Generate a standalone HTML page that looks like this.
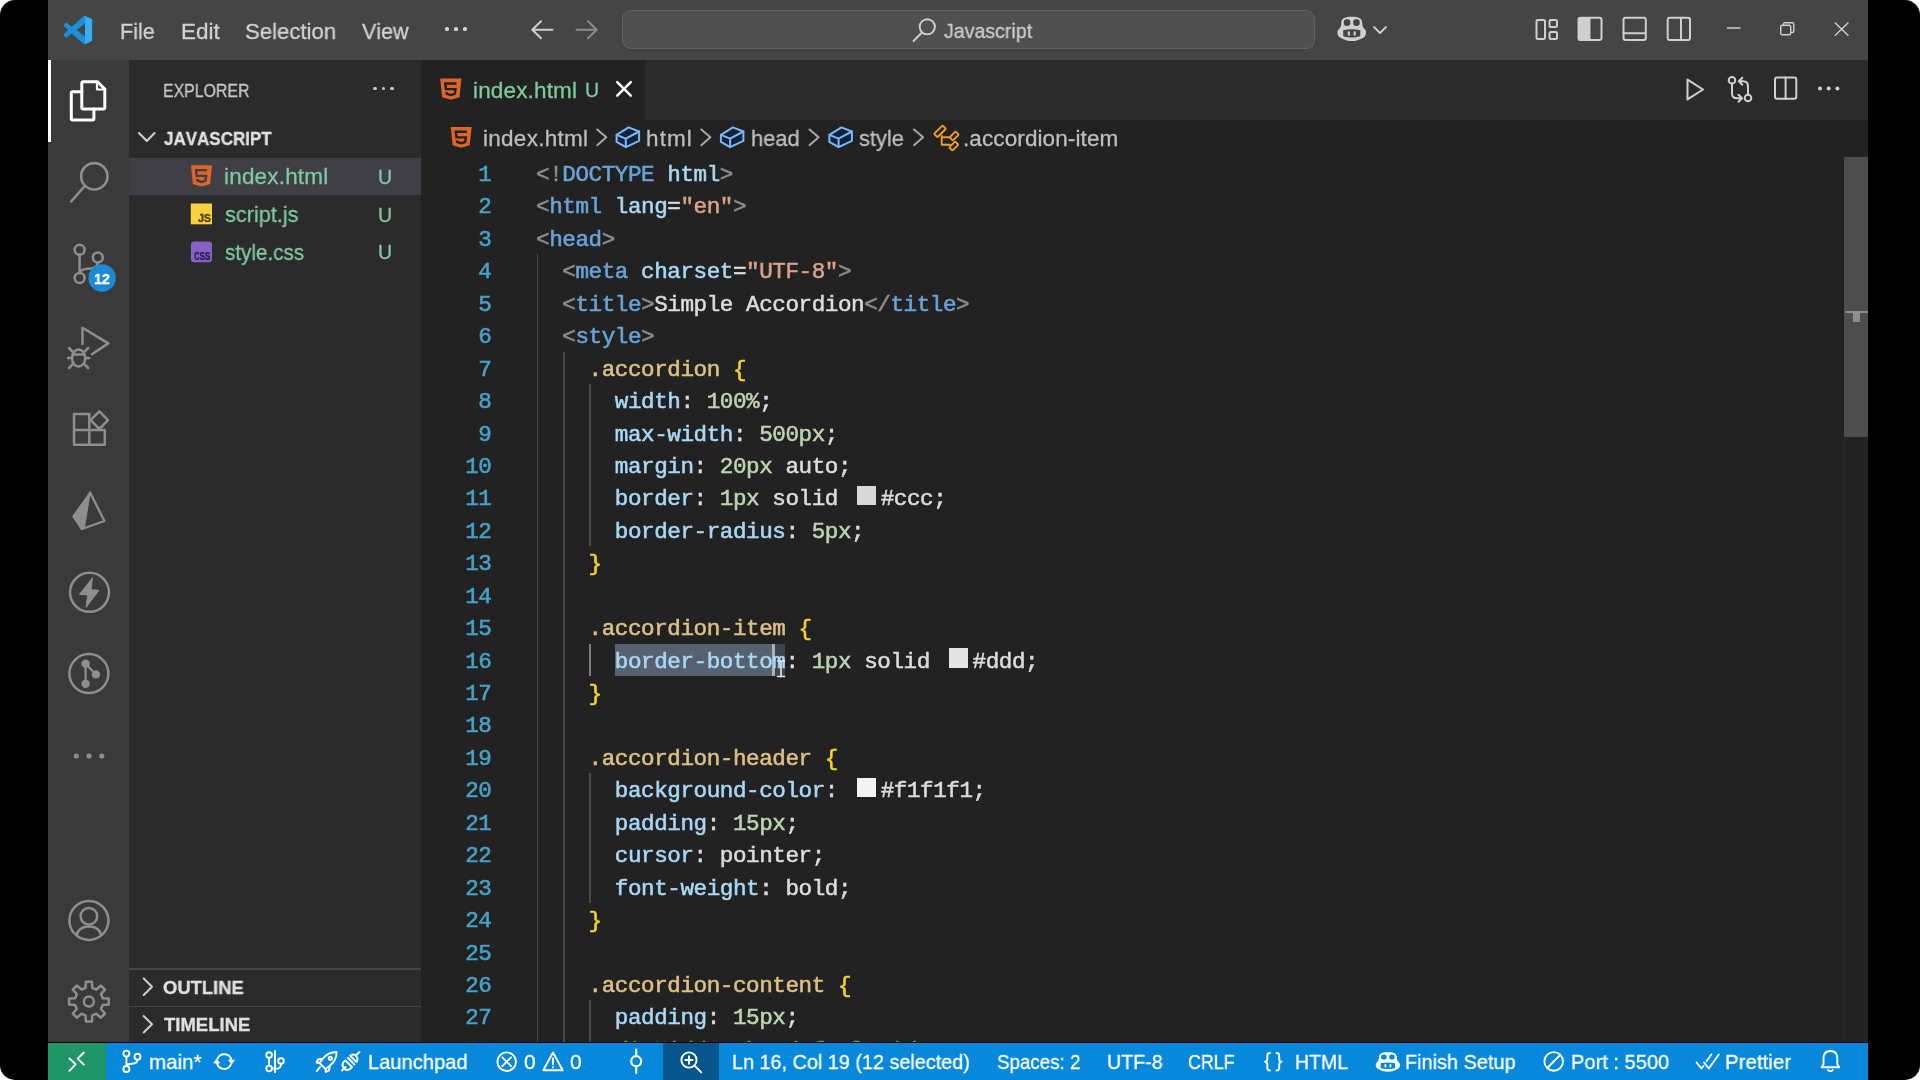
<!DOCTYPE html>
<html><head><meta charset="utf-8"><title>VS Code</title><style>
html,body{margin:0;padding:0;background:#000;font-family:"Liberation Sans",sans-serif;}
head,title,style,meta{font-family:"Liberation Sans",sans-serif;}
body{width:1920px;height:1080px;position:relative;overflow:hidden;font-family:"Liberation Sans",sans-serif;font-kerning:none;}
.r{position:absolute;}
.t{position:absolute;white-space:pre;line-height:1;font-kerning:none;transform-origin:0 0;}
.t,.code{will-change:transform}
.code{-webkit-text-stroke:0.55px}
.t{-webkit-text-stroke:0.3px}
.b{font-weight:bold}
.m{font-family:"Liberation Mono",monospace}
.code{position:absolute;overflow:hidden;font-family:"Liberation Mono",monospace;white-space:pre;font-kerning:none;width:1300px}
.ln{position:absolute;height:32.44px;line-height:32.44px;}
.sw{display:inline-block;width:19.3px;height:19.3px;margin:0 4.7px 0 5.6px;vertical-align:0;box-sizing:border-box;}
.corner{position:absolute;width:16px;height:16px;background:#fff;}
</style></head><body>
<div class="corner" style="left:0;top:0"></div><div class="corner" style="right:0;top:0"></div>
<div class="corner" style="left:0;bottom:0"></div><div class="corner" style="right:0;bottom:0"></div>
<div class="r" style="left:0;top:0;width:1920px;height:1080px;background:#000;border-radius:15px"></div>
<div class="r" style="left:48px;top:0px;width:1820.40px;height:59.80px;background:#454545;"></div>
<div class="r" style="left:48px;top:59.8px;width:81.40px;height:982.70px;background:#3a3a3a;"></div>
<div class="r" style="left:129.4px;top:59.8px;width:291.20px;height:982.70px;background:#2b2b2b;"></div>
<div class="r" style="left:420.6px;top:59.8px;width:1447.80px;height:982.70px;background:#222222;"></div>
<div class="r" style="left:420.6px;top:59.8px;width:1447.80px;height:59.80px;background:#2b2b2b;"></div>
<div class="r" style="left:420.6px;top:59.8px;width:224.40px;height:59.80px;background:#222222;"></div>
<div class="r" style="left:48px;top:1042.5px;width:1820.40px;height:37.50px;background:#0888da;"></div>
<div class="r" style="left:48px;top:1042.5px;width:58.00px;height:37.50px;background:#1f9568;"></div>
<div class="r" style="left:662.5px;top:1042.5px;width:56.50px;height:37.50px;background:#07558d;"></div>
<div class="r" style="left:48px;top:59.8px;width:3.00px;height:82.20px;background:#ffffff;"></div>
<span class="t" style="left:120.23px;top:20.75px;font-size:22.5px;color:#d2d2d2;letter-spacing:0.000px;transform:scaleX(0.9578);">File</span>
<span class="t" style="left:180.88px;top:20.75px;font-size:22.5px;color:#d2d2d2;letter-spacing:0.000px;transform:scaleX(0.9875);">Edit</span>
<span class="t" style="left:244.99px;top:20.75px;font-size:22.5px;color:#d2d2d2;letter-spacing:0.000px;transform:scaleX(0.9847);">Selection</span>
<span class="t" style="left:362.41px;top:20.75px;font-size:22.5px;color:#d2d2d2;letter-spacing:0.000px;transform:scaleX(0.9543);">View</span>
<div class="r" style="left:445.4px;top:27.4px;width:3.20px;height:3.20px;background:#d2d2d2;border-radius:50%"></div>
<div class="r" style="left:454.4px;top:27.4px;width:3.20px;height:3.20px;background:#d2d2d2;border-radius:50%"></div>
<div class="r" style="left:463.4px;top:27.4px;width:3.20px;height:3.20px;background:#d2d2d2;border-radius:50%"></div>
<div class="r" style="left:622px;top:10px;width:693px;height:39px;box-sizing:border-box;background:#505050;border:1.5px solid #626262;border-radius:9px"></div>
<span class="t" style="left:943.69px;top:19.90px;font-size:21px;color:#cccccc;letter-spacing:0.000px;transform:scaleX(0.9325);">Javascript</span>
<span class="t" style="left:163.40px;top:81.40px;font-size:19px;color:#c8c8c8;letter-spacing:0.000px;transform:scaleX(0.8363);">EXPLORER</span>
<div class="r" style="left:373.4px;top:87px;width:3.20px;height:3.20px;background:#c8c8c8;border-radius:50%"></div>
<div class="r" style="left:381.9px;top:87px;width:3.20px;height:3.20px;background:#c8c8c8;border-radius:50%"></div>
<div class="r" style="left:390.4px;top:87px;width:3.20px;height:3.20px;background:#c8c8c8;border-radius:50%"></div>
<span class="t b" style="left:164.04px;top:129.70px;font-size:18.8px;color:#e0e0e0;letter-spacing:0.000px;transform:scaleX(0.9047);">JAVASCRIPT</span>
<div class="r" style="left:129.4px;top:157.8px;width:291.20px;height:37.20px;background:#3f3f45;"></div>
<span class="t" style="left:223.89px;top:166.35px;font-size:22.5px;color:#7fca9f;letter-spacing:0.185px;">index.html</span>
<span class="t" style="left:378.10px;top:167.85px;font-size:19.5px;color:#7fca9f;letter-spacing:0.000px;">U</span>
<span class="t" style="left:224.80px;top:204.35px;font-size:22.5px;color:#7fca9f;letter-spacing:0.000px;transform:scaleX(0.9637);">script.js</span>
<span class="t" style="left:378.10px;top:205.85px;font-size:19.5px;color:#7fca9f;letter-spacing:0.000px;">U</span>
<span class="t" style="left:224.83px;top:241.65px;font-size:22.5px;color:#7fca9f;letter-spacing:0.000px;transform:scaleX(0.9172);">style.css</span>
<span class="t" style="left:378.10px;top:243.15px;font-size:19.5px;color:#7fca9f;letter-spacing:0.000px;">U</span>
<div class="r" style="left:129.4px;top:968px;width:291.20px;height:1.50px;background:#454545;"></div>
<div class="r" style="left:129.4px;top:1005.5px;width:291.20px;height:1.50px;background:#454545;"></div>
<span class="t b" style="left:163.25px;top:978.75px;font-size:18.5px;color:#e0e0e0;letter-spacing:0.000px;transform:scaleX(0.9949);">OUTLINE</span>
<span class="t b" style="left:163.79px;top:1016.45px;font-size:18.5px;color:#e0e0e0;letter-spacing:0.000px;transform:scaleX(0.9988);">TIMELINE</span>
<span class="t" style="left:473.49px;top:79.75px;font-size:22.5px;color:#7fca9f;letter-spacing:0.163px;">index.html</span>
<span class="t" style="left:584.50px;top:81.25px;font-size:19.5px;color:#7fca9f;letter-spacing:0.000px;">U</span>
<span class="t" style="left:483.49px;top:128.05px;font-size:22.5px;color:#bebebe;letter-spacing:0.274px;">index.html</span>
<span class="t" style="left:645.94px;top:128.05px;font-size:22.5px;color:#bebebe;letter-spacing:1.120px;">html</span>
<span class="t" style="left:750.98px;top:128.05px;font-size:22.5px;color:#bebebe;letter-spacing:0.000px;transform:scaleX(0.9736);">head</span>
<span class="t" style="left:859.39px;top:128.05px;font-size:22.5px;color:#bebebe;letter-spacing:0.000px;transform:scaleX(0.9700);">style</span>
<span class="t" style="left:962.95px;top:128.05px;font-size:22.5px;color:#bebebe;letter-spacing:0.102px;">.accordion-item</span>
<span class="t" style="left:149.43px;top:1051.10px;font-size:21px;color:#ffffff;letter-spacing:0.000px;transform:scaleX(0.9795);">main*</span>
<span class="t" style="left:368.35px;top:1051.10px;font-size:21px;color:#ffffff;letter-spacing:0.000px;transform:scaleX(0.9588);">Launchpad</span>
<span class="t" style="left:524.18px;top:1051.10px;font-size:21px;color:#ffffff;letter-spacing:0.000px;">0</span>
<span class="t" style="left:569.98px;top:1051.10px;font-size:21px;color:#ffffff;letter-spacing:0.000px;">0</span>
<span class="t" style="left:732.38px;top:1051.10px;font-size:21px;color:#ffffff;letter-spacing:0.000px;transform:scaleX(0.9433);">Ln 16, Col 19 (12 selected)</span>
<span class="t" style="left:997.45px;top:1051.10px;font-size:21px;color:#ffffff;letter-spacing:0.000px;transform:scaleX(0.8940);">Spaces: 2</span>
<span class="t" style="left:1106.78px;top:1051.10px;font-size:21px;color:#ffffff;letter-spacing:0.000px;transform:scaleX(0.9375);">UTF-8</span>
<span class="t" style="left:1188.09px;top:1051.10px;font-size:21px;color:#ffffff;letter-spacing:0.000px;transform:scaleX(0.8502);">CRLF</span>
<span class="t" style="left:1295.10px;top:1051.10px;font-size:21px;color:#ffffff;letter-spacing:0.000px;transform:scaleX(0.9279);">HTML</span>
<span class="t" style="left:1405.07px;top:1051.10px;font-size:21px;color:#ffffff;letter-spacing:0.000px;transform:scaleX(0.9490);">Finish Setup</span>
<span class="t" style="left:1570.85px;top:1051.10px;font-size:21px;color:#ffffff;letter-spacing:0.000px;transform:scaleX(0.9562);">Port : 5500</span>
<span class="t" style="left:1725.02px;top:1051.10px;font-size:21px;color:#ffffff;letter-spacing:0.000px;transform:scaleX(0.9769);">Prettier</span>
<div class="r" style="left:1844px;top:156.9px;width:1.30px;height:885.60px;background:#292929;"></div>
<div class="r" style="left:1845.3px;top:156.9px;width:23.10px;height:885.60px;background:#232323;"></div>
<div class="r" style="left:1844px;top:157.3px;width:24.40px;height:279.90px;background:#4d4d4d;"></div>
<div class="r" style="left:1845.4px;top:310.5px;width:23.00px;height:2.80px;background:#8e8e8e;"></div>
<div class="r" style="left:1853px;top:313.3px;width:7.20px;height:8.40px;background:#8e8e8e;"></div>
<div class="r" style="left:614.78px;top:643.5px;width:170.69px;height:32.44px;background:#3c444d;"></div>
<div class="r" style="left:614.78px;top:643.5px;width:157.56px;height:32.44px;background:#56626f;"></div>
<div class="r" style="left:772.34px;top:643.5px;width:3.00px;height:32.44px;background:#b0b0b0;"></div>
<div class="r" style="left:536.8px;top:254.22px;width:1.50px;height:788.28px;background:#494949;"></div>
<div class="r" style="left:563.06px;top:351.53999999999996px;width:1.50px;height:690.96px;background:#494949;"></div>
<div class="r" style="left:589.3199999999999px;top:383.98px;width:1.50px;height:162.20px;background:#494949;"></div>
<div class="r" style="left:589.3199999999999px;top:773.2599999999999px;width:1.50px;height:129.76px;background:#494949;"></div>
<div class="r" style="left:589.3199999999999px;top:1000.3399999999999px;width:1.50px;height:42.16px;background:#494949;"></div>
<div class="r" style="left:589.3199999999999px;top:643.5px;width:1.50px;height:32.44px;background:#7a7a7a;"></div>
<div class="code" style="left:536.0px;top:159.1px;height:883.4px;font-size:22.6px;letter-spacing:-0.432px">
<div class="ln" style="top:0.00px"><span style="color:#8c8c8c">&lt;!</span><span style="color:#69a3d8">DOCTYPE</span><span style="color:#a8d8f6"> html</span><span style="color:#8c8c8c">&gt;</span></div>
<div class="ln" style="top:32.44px"><span style="color:#8c8c8c">&lt;</span><span style="color:#69a3d8">html</span><span style="color:#a8d8f6"> lang</span><span style="color:#dcdcdc">=</span><span style="color:#dba189">&quot;en&quot;</span><span style="color:#8c8c8c">&gt;</span></div>
<div class="ln" style="top:64.88px"><span style="color:#8c8c8c">&lt;</span><span style="color:#69a3d8">head</span><span style="color:#8c8c8c">&gt;</span></div>
<div class="ln" style="top:97.32px"><span style="color:#8c8c8c">  &lt;</span><span style="color:#69a3d8">meta</span><span style="color:#a8d8f6"> charset</span><span style="color:#dcdcdc">=</span><span style="color:#dba189">&quot;UTF-8&quot;</span><span style="color:#8c8c8c">&gt;</span></div>
<div class="ln" style="top:129.76px"><span style="color:#8c8c8c">  &lt;</span><span style="color:#69a3d8">title</span><span style="color:#8c8c8c">&gt;</span><span style="color:#dcdcdc">Simple Accordion</span><span style="color:#8c8c8c">&lt;/</span><span style="color:#69a3d8">title</span><span style="color:#8c8c8c">&gt;</span></div>
<div class="ln" style="top:162.20px"><span style="color:#8c8c8c">  &lt;</span><span style="color:#69a3d8">style</span><span style="color:#8c8c8c">&gt;</span></div>
<div class="ln" style="top:194.64px"><span style="color:#dcc084">    .accordion </span><span style="color:#f7d427">{</span></div>
<div class="ln" style="top:227.08px"><span style="color:#a8d8f6">      width</span><span style="color:#dcdcdc">: </span><span style="color:#bcd4b0">100%</span><span style="color:#dcdcdc">;</span></div>
<div class="ln" style="top:259.52px"><span style="color:#a8d8f6">      max-width</span><span style="color:#dcdcdc">: </span><span style="color:#bcd4b0">500px</span><span style="color:#dcdcdc">;</span></div>
<div class="ln" style="top:291.96px"><span style="color:#a8d8f6">      margin</span><span style="color:#dcdcdc">: </span><span style="color:#bcd4b0">20px</span><span style="color:#dcdcdc"> auto;</span></div>
<div class="ln" style="top:324.40px"><span style="color:#a8d8f6">      border</span><span style="color:#dcdcdc">: </span><span style="color:#bcd4b0">1px</span><span style="color:#dcdcdc"> solid </span><i class="sw" style="background:#d8d8d8"></i><span style="color:#dcdcdc">#ccc;</span></div>
<div class="ln" style="top:356.84px"><span style="color:#a8d8f6">      border-radius</span><span style="color:#dcdcdc">: </span><span style="color:#bcd4b0">5px</span><span style="color:#dcdcdc">;</span></div>
<div class="ln" style="top:389.28px"><span style="color:#f7d427">    }</span></div>
<div class="ln" style="top:421.72px"></div>
<div class="ln" style="top:454.16px"><span style="color:#dcc084">    .accordion-item </span><span style="color:#f7d427">{</span></div>
<div class="ln" style="top:486.60px"><span style="color:#a8d8f6">      border-bottom</span><span style="color:#dcdcdc">: </span><span style="color:#bcd4b0">1px</span><span style="color:#dcdcdc"> solid </span><i class="sw" style="background:#e4e4e4"></i><span style="color:#dcdcdc">#ddd;</span></div>
<div class="ln" style="top:519.04px"><span style="color:#f7d427">    }</span></div>
<div class="ln" style="top:551.48px"></div>
<div class="ln" style="top:583.92px"><span style="color:#dcc084">    .accordion-header </span><span style="color:#f7d427">{</span></div>
<div class="ln" style="top:616.36px"><span style="color:#a8d8f6">      background-color</span><span style="color:#dcdcdc">: </span><i class="sw" style="background:#f4f4f4"></i><span style="color:#dcdcdc">#f1f1f1;</span></div>
<div class="ln" style="top:648.80px"><span style="color:#a8d8f6">      padding</span><span style="color:#dcdcdc">: </span><span style="color:#bcd4b0">15px</span><span style="color:#dcdcdc">;</span></div>
<div class="ln" style="top:681.24px"><span style="color:#a8d8f6">      cursor</span><span style="color:#dcdcdc">: pointer;</span></div>
<div class="ln" style="top:713.68px"><span style="color:#a8d8f6">      font-weight</span><span style="color:#dcdcdc">: bold;</span></div>
<div class="ln" style="top:746.12px"><span style="color:#f7d427">    }</span></div>
<div class="ln" style="top:778.56px"></div>
<div class="ln" style="top:811.00px"><span style="color:#dcc084">    .accordion-content </span><span style="color:#f7d427">{</span></div>
<div class="ln" style="top:843.44px"><span style="color:#a8d8f6">      padding</span><span style="color:#dcdcdc">: </span><span style="color:#bcd4b0">15px</span><span style="color:#dcdcdc">;</span></div>
<div class="ln" style="top:875.88px"><span style="color:#6f9f5f">      /* Hidden by default */</span></div>
</div>
<div class="code" style="left:430.8px;width:60px;text-align:right;top:159.1px;height:883.4px;font-size:22.6px;letter-spacing:-0.432px;color:#46a2c8">
<div class="ln" style="top:0.00px;right:-0.432px">1</div>
<div class="ln" style="top:32.44px;right:-0.432px">2</div>
<div class="ln" style="top:64.88px;right:-0.432px">3</div>
<div class="ln" style="top:97.32px;right:-0.432px">4</div>
<div class="ln" style="top:129.76px;right:-0.432px">5</div>
<div class="ln" style="top:162.20px;right:-0.432px">6</div>
<div class="ln" style="top:194.64px;right:-0.432px">7</div>
<div class="ln" style="top:227.08px;right:-0.432px">8</div>
<div class="ln" style="top:259.52px;right:-0.432px">9</div>
<div class="ln" style="top:291.96px;right:-0.432px">10</div>
<div class="ln" style="top:324.40px;right:-0.432px">11</div>
<div class="ln" style="top:356.84px;right:-0.432px">12</div>
<div class="ln" style="top:389.28px;right:-0.432px">13</div>
<div class="ln" style="top:421.72px;right:-0.432px">14</div>
<div class="ln" style="top:454.16px;right:-0.432px">15</div>
<div class="ln" style="top:486.60px;right:-0.432px">16</div>
<div class="ln" style="top:519.04px;right:-0.432px">17</div>
<div class="ln" style="top:551.48px;right:-0.432px">18</div>
<div class="ln" style="top:583.92px;right:-0.432px">19</div>
<div class="ln" style="top:616.36px;right:-0.432px">20</div>
<div class="ln" style="top:648.80px;right:-0.432px">21</div>
<div class="ln" style="top:681.24px;right:-0.432px">22</div>
<div class="ln" style="top:713.68px;right:-0.432px">23</div>
<div class="ln" style="top:746.12px;right:-0.432px">24</div>
<div class="ln" style="top:778.56px;right:-0.432px">25</div>
<div class="ln" style="top:811.00px;right:-0.432px">26</div>
<div class="ln" style="top:843.44px;right:-0.432px">27</div>
<div class="ln" style="top:875.88px;right:-0.432px">28</div>
</div><svg class="r" style="left:0;top:0" width="1920" height="1080" viewBox="0 0 1920 1080" fill="none" stroke-linecap="round" stroke-linejoin="round"><g transform="translate(63.6,15.8) scale(0.285)"><path d="M70.9119 99.3171C72.4869 99.9307 74.2828 99.8914 75.8725 99.1264L96.4608 89.2197C98.6242 88.1787 100 85.9892 100 83.5872V16.4133C100 14.0113 98.6243 11.8218 96.4609 10.7808L75.8725 0.873756C73.7862 -0.130129 71.3446 0.11576 69.5135 1.44695C69.252 1.63711 69.0028 1.84943 68.769 2.08341L29.3551 38.0415L12.1872 25.0096C10.589 23.7965 8.35363 23.8959 6.86933 25.2461L1.36303 30.2549C-0.452552 31.9064 -0.454633 34.7627 1.35853 36.417L16.2471 50.0001L1.35853 63.5832C-0.454633 65.2374 -0.452552 68.0938 1.36303 69.7453L6.86933 74.7541C8.35363 76.1043 10.589 76.2037 12.1872 74.9905L29.3551 61.9587L68.769 97.9167C69.3925 98.5406 70.1246 99.0104 70.9119 99.3171ZM75.0152 27.2989L45.1091 50.0001L75.0152 72.7012V27.2989Z" fill="#1b8fdb" fill-rule="evenodd" stroke="none"/><path d="M75.0152 0.5 L96.4609 10.7808C98.6243 11.8218 100 14.0113 100 16.4133V83.5872C100 85.9892 98.6242 88.1787 96.4608 89.2197L75.0152 99.5 Z" fill="#35aef5" stroke="none"/></g><g stroke="#ffffff" stroke-width="3"><path d="M83.3 81.7 H97.5 L104.8 89 V107.5 Q104.8 109 103.3 109 H83.3 Q81.8 109 81.8 107.5 V83.2 Q81.8 81.7 83.3 81.7 Z"/><path d="M97 82 V89.5 H104.5" stroke-width="2.2"/><path d="M81.8 91.8 H72.8 Q71.3 91.8 71.3 93.3 V118.4 Q71.3 119.9 72.8 119.9 H92.4 Q93.9 119.9 93.9 118.4 V109"/></g><g stroke="#8e8e8e" stroke-width="2.6"><circle cx="94.3" cy="176.3" r="13.2"/><path d="M84.8 186 L71.2 201.3"/></g><g stroke="#8e8e8e" stroke-width="2.5"><circle cx="79.6" cy="249.8" r="5"/><circle cx="97.8" cy="257.5" r="5"/><circle cx="79.6" cy="278" r="5"/><path d="M79.6 254.8 V273"/><path d="M97.8 262.5 Q97.5 268.5 88 268.8 Q80.5 269 79.6 273"/></g><circle cx="102.1" cy="278" r="13.7" fill="#1a8ad4"/><g stroke="#8e8e8e" stroke-width="2.5"><path d="M82.5 344 V327.8 L108.3 343.4 L92 354.2"/><ellipse cx="78.6" cy="358" rx="6.6" ry="8.6"/><path d="M72.5 351.5 L69 348 M84.7 351.5 L88.2 348 M72 358 H68 M85.2 358 H89.2 M72.5 364.5 L69 368 M84.7 364.5 L88.2 368 M73 354.5 H84.2"/></g><g stroke="#8e8e8e" stroke-width="2.5"><path d="M74 414 H89.3 V430 M74 414 V444.8 H104.8 V430 H74 M89.3 430 V444.8"/><path d="M99.3 411.3 L108 420.2 L99.3 429 L90.6 420.2 Z"/></g><path d="M90 492.5 L73 516.5 L81.5 529 L84.3 527.2 Z" fill="#8e8e8e" stroke="#8e8e8e" stroke-width="1.5"/><path d="M90 492.5 L104.5 521 L81.8 529" stroke="#8e8e8e" stroke-width="2.3"/><circle cx="89.5" cy="592.3" r="19.5" stroke="#8e8e8e" stroke-width="2.5"/><path d="M92.3 578 L79.5 594.3 L87.7 595 L86.1 607.3 L99 590.4 L91.2 589.7 Z" fill="#8e8e8e" stroke="#8e8e8e" stroke-width="1"/><circle cx="88.9" cy="673.6" r="19.5" stroke="#8e8e8e" stroke-width="2.5"/><g fill="#8e8e8e" stroke="none"><circle cx="85.6" cy="663.8" r="4.2"/><circle cx="95.9" cy="674.4" r="4.2"/><circle cx="85.6" cy="683.7" r="4.2"/></g><path d="M85.6 663.8 V683.7 M85.6 663.8 L95.9 674.4" stroke="#8e8e8e" stroke-width="2.2"/><g fill="#8e8e8e" stroke="none"><circle cx="76.3" cy="756" r="2.6"/><circle cx="89" cy="756" r="2.6"/><circle cx="101.8" cy="756" r="2.6"/></g><g stroke="#8e8e8e" stroke-width="2.5"><circle cx="88.9" cy="920.4" r="19.5"/><circle cx="88.9" cy="916.3" r="8.3"/><path d="M76.6 935.3 Q78.5 926.5 88.9 926.5 Q99.3 926.5 101.2 935.3"/></g><path d="M85.5 987.8 L85.9 981.8 L91.9 981.8 L92.3 987.8 L96.3 989.5 L100.8 985.5 L105.0 989.7 L101.0 994.2 L102.7 998.2 L108.7 998.6 L108.7 1004.6 L102.7 1005.0 L101.0 1009.0 L105.0 1013.5 L100.8 1017.7 L96.3 1013.7 L92.3 1015.4 L91.9 1021.4 L85.9 1021.4 L85.5 1015.4 L81.5 1013.7 L77.0 1017.7 L72.8 1013.5 L76.8 1009.0 L75.1 1005.0 L69.1 1004.6 L69.1 998.6 L75.1 998.2 L76.8 994.2 L72.8 989.7 L77.0 985.5 L81.5 989.5 Z" stroke="#8e8e8e" stroke-width="2.5"/><circle cx="88.9" cy="1001.6" r="5" stroke="#8e8e8e" stroke-width="2.5"/><g stroke="#cfcfcf" stroke-width="2"><path d="M552.5 29.7 H532.3 M541 21.3 L532.3 29.7 L541 38.3"/></g><g stroke="#8c8c8c" stroke-width="2"><path d="M576.5 29.7 H596.7 M588 21.3 L596.7 29.7 L588 38.3"/></g><g stroke="#cfcfcf" stroke-width="1.9"><circle cx="927.3" cy="26.8" r="7.6"/><path d="M922 32.5 L913.5 41"/></g><g stroke="none" fill="#cfcfcf"><path d="M1351.75 16.7 C1343.2 16.7 1341.205 19.13 1341.205 23.504 C1341.205 26.42 1340.35 27.634999999999998 1338.07 30.065 C1336.93 31.766 1337.5 35.653999999999996 1338.925 36.626 C1343.2 39.785 1347.475 41.0 1351.75 41.0 C1356.025 41.0 1360.3 39.785 1364.575 36.626 C1366.0 35.653999999999996 1366.57 31.766 1365.43 30.065 C1363.15 27.634999999999998 1362.295 26.42 1362.295 23.504 C1362.295 19.13 1360.3 16.7 1351.75 16.7 Z"/></g><g fill="#454545" stroke="none"><rect x="1343.77" y="19.372999999999998" width="6.555000000000001" height="6.561000000000001" rx="2.85"/><rect x="1353.175" y="19.372999999999998" width="6.555000000000001" height="6.561000000000001" rx="2.85"/><path d="M1343.2 30.308 Q1351.75 28.363999999999997 1360.3 30.308 V36.14 Q1351.75 39.056 1343.2 36.14 Z"/></g><g fill="#cfcfcf" stroke="none"><rect x="1347.76" y="31.28" width="2.1374999999999997" height="4.374" rx="0.855"/><rect x="1353.6025" y="31.28" width="2.1374999999999997" height="4.374" rx="0.855"/></g><path d="M1374 27 L1380 33 L1386 27" stroke="#cfcfcf" stroke-width="1.8"/><g stroke="#cfcfcf" stroke-width="2"><rect x="1536.5" y="20" width="8.5" height="19" rx="1.5"/><rect x="1549.5" y="20" width="7.5" height="7" rx="1.5"/><rect x="1549.5" y="32" width="7.5" height="7" rx="1.5"/></g><g stroke="#cfcfcf" stroke-width="2"><rect x="1578.5" y="17.7" width="23" height="22.3" rx="2"/><path d="M1579 18.5 H1589.5 V39.5 H1579 Z" fill="#cfcfcf"/></g><g stroke="#cfcfcf" stroke-width="2"><rect x="1623.5" y="17.7" width="22.3" height="22.3" rx="2"/><path d="M1623.5 33.3 H1645.8"/></g><g stroke="#cfcfcf" stroke-width="2"><rect x="1667.7" y="17.7" width="22.3" height="22.3" rx="2"/><path d="M1681 17.7 V40"/></g><path d="M1727.5 28 H1740" stroke="#cfcfcf" stroke-width="1.4"/><g stroke="#cfcfcf" stroke-width="1.4"><rect x="1780.7" y="25.3" width="10" height="9.5" rx="1.5"/><path d="M1783.5 25 V24.3 Q1783.5 22.8 1785 22.8 H1792.3 Q1793.8 22.8 1793.8 24.3 V31 Q1793.8 32.5 1792.3 32.5 H1791"/></g><path d="M1835.3 23 L1848 35.3 M1848 23 L1835.3 35.3" stroke="#cfcfcf" stroke-width="1.4"/></svg><svg class="r" style="left:0;top:0" width="1920" height="1080" viewBox="0 0 1920 1080" fill="none" stroke-linecap="round" stroke-linejoin="round"><path d="M139 133 L146.8 141 L154.6 133" stroke="#d0d0d0" stroke-width="2"/><path d="M143.7 978.5 L152 986.8 L143.7 995" stroke="#d0d0d0" stroke-width="2"/><path d="M143.7 1016 L152 1024.3 L143.7 1032.5" stroke="#d0d0d0" stroke-width="2"/><path d="M191 165.2 H212 L210.11 184.03199999999998 L201.5 186.6 L192.89 184.03199999999998 Z" fill="#e0652a" stroke="none"/><path d="M207.17000000000002 170.12199999999999 H196.04 L196.67 175.89999999999998 H206.12 L205.49 180.608 L201.5 181.892 L197.51 180.608 L197.3 178.896" stroke="#3f3f45" stroke-width="2.42" fill="none" stroke-linecap="butt" stroke-linejoin="miter"/><rect x="190.8" y="203.5" width="21.2" height="20.8" fill="#f7d23c"/><rect x="191" y="241.4" width="21" height="20.8" rx="3.2" fill="#8462c6"/><path d="M440.2 78.6 H461.4 L459.49199999999996 97.168 L450.79999999999995 99.7 L442.108 97.168 Z" fill="#e0652a" stroke="none"/><path d="M456.524 83.453 H445.288 L445.924 89.15 H455.464 L454.828 93.792 L450.79999999999995 95.05799999999999 L446.772 93.792 L446.56 92.104" stroke="#222222" stroke-width="2.44" fill="none" stroke-linecap="butt" stroke-linejoin="miter"/><path d="M617.2 82.2 L630.8 95.6 M630.8 82.2 L617.2 95.6" stroke="#ffffff" stroke-width="2.5"/><path d="M450.8 127.0 H471.6 L469.728 145.304 L461.20000000000005 147.8 L452.672 145.304 Z" fill="#e0652a" stroke="none"/><path d="M466.81600000000003 131.784 H455.79200000000003 L456.416 137.4 H465.776 L465.15200000000004 141.976 L461.20000000000005 143.22400000000002 L457.248 141.976 L457.04 140.312" stroke="#222222" stroke-width="2.39" fill="none" stroke-linecap="butt" stroke-linejoin="miter"/><path d="M597.2 129.5 L606.3000000000001 137.35 L597.2 145.2" stroke="#a8a8a8" stroke-width="2"/><path d="M701.3 129.5 L710.4 137.35 L701.3 145.2" stroke="#a8a8a8" stroke-width="2"/><path d="M809.5 129.5 L818.6 137.35 L809.5 145.2" stroke="#a8a8a8" stroke-width="2"/><path d="M914 129.5 L923.1 137.35 L914 145.2" stroke="#a8a8a8" stroke-width="2"/><path d="M628.6 127.4 L639.1 131.5 V140.9 L625.8 147.1 L616.6 141.9 V134.8 Z" fill="#10233a" stroke="#7db8f5" stroke-width="2"/><path d="M616.6 134.8 L625.8 138.6 L639.1 131.5 M625.8 138.6 V147.1" stroke="#7db8f5" stroke-width="2"/><path d="M732.9 127.4 L743.4 131.5 V140.9 L730.1 147.1 L720.9 141.9 V134.8 Z" fill="#10233a" stroke="#7db8f5" stroke-width="2"/><path d="M720.9 134.8 L730.1 138.6 L743.4 131.5 M730.1 138.6 V147.1" stroke="#7db8f5" stroke-width="2"/><path d="M841.4 127.4 L851.9 131.5 V140.9 L838.6 147.1 L829.4 141.9 V134.8 Z" fill="#10233a" stroke="#7db8f5" stroke-width="2"/><path d="M829.4 134.8 L838.6 138.6 L851.9 131.5 M838.6 138.6 V147.1" stroke="#7db8f5" stroke-width="2"/><g stroke="#ee9d28" stroke-width="1.9"><rect x="-6" y="-2.4" width="12" height="4.8" rx="1" transform="translate(940,131.3) rotate(-45)"/><rect x="-4.2" y="-2.3" width="8.4" height="4.6" rx="1" transform="translate(954.2,136) rotate(-45)"/><rect x="-4.2" y="-2.3" width="8.4" height="4.6" rx="1" transform="translate(953.8,146) rotate(-45)"/><path d="M941.7 137.3 H950.5 M941.7 136 V144.7 H950"/></g><path d="M1687.5 79.6 L1703 89.5 L1687.5 99.4 Z" stroke="#d0d0d0" stroke-width="2"/><g stroke="#d0d0d0" stroke-width="2"><circle cx="1732" cy="80.3" r="3.3"/><circle cx="1748" cy="98" r="3.3"/><path d="M1732 83.8 V93 Q1732 98.3 1737 98.3 H1741.5 M1738.5 94.8 L1742 98.3 L1738.5 101.8"/><path d="M1748 94.5 V86.5 Q1748 81.2 1743 81.2 H1739.3 M1742.3 77.7 L1738.8 81.2 L1742.3 84.7"/></g><g stroke="#d0d0d0" stroke-width="2"><rect x="1775" y="77.6" width="21.3" height="21.2" rx="2"/><path d="M1785.6 77.6 V98.8"/></g><g fill="#d0d0d0" stroke="none"><circle cx="1820" cy="88.6" r="2"/><circle cx="1828.7" cy="88.6" r="2"/><circle cx="1837.4" cy="88.6" r="2"/></g><g stroke="#ffffff" stroke-width="1.9"><path d="M69.4 1058.4 L75.6 1064.3 L69.4 1070.8 M83.8 1052.5 L77.7 1058.6 L83.8 1064.7"/><circle cx="126.4" cy="1053.6" r="3"/><circle cx="126.4" cy="1069" r="3"/><circle cx="137.5" cy="1056.8" r="3"/><path d="M126.4 1056.6 V1066 M137.5 1059.8 Q137.3 1063.5 132 1063.8 Q127 1064 126.4 1066"/><path d="M217.6 1058.5 A7.3 7.3 0 0 1 231.4 1060.2 M230.8 1064.7 A7.3 7.3 0 0 1 217 1063"/><path d="M229 1060.2 H234.4 L231.7 1063.8 Z M214.1 1063 H219.5 L216.8 1059.4 Z" fill="#ffffff" stroke-width="0.9"/><circle cx="269.1" cy="1055" r="2.8"/><circle cx="269.1" cy="1068.4" r="2.8"/><circle cx="281" cy="1060.9" r="2.8"/><path d="M269.1 1057.8 V1065.6 M275 1051 V1072.2 M281 1063.7 Q281 1068.5 276.5 1068.6 H272"/><path d="M336.6 1052 Q328 1052 323 1058.5 L319.5 1063 L325.5 1069 L330 1065.5 Q336.6 1060.5 336.6 1052 Z M323 1058.5 L318 1059.5 L316.5 1062.5 L319.5 1063 M330 1065.5 L329 1070.5 L326 1072 L325.5 1069 M320 1067 L316.8 1071.2" /><circle cx="330.3" cy="1058.3" r="1.6"/><path d="M342 1070.5 L345.5 1067 M345.3 1060.3 L352 1067 L349.8 1069.2 Q346.5 1071 343.8 1068.3 Q341.5 1065.5 343.2 1062.4 Z M348 1058 L354.5 1064.5 M350.2 1055.8 Q353 1053.3 356 1055.8 Q358.8 1058.8 356.5 1062 L350.2 1055.8 M355.8 1055.5 L359.5 1052"/><circle cx="506.7" cy="1061.7" r="9.3"/><path d="M502.3 1057.3 L511.1 1066.1 M511.1 1057.3 L502.3 1066.1"/><path d="M553 1052.5 L562.7 1070.3 H543.3 Z M553 1058.5 V1064.3 M553 1067 V1067.4"/><circle cx="636.2" cy="1061.2" r="5" stroke-width="2.2"/><path d="M636.2 1049.5 V1056 M636.2 1066.4 V1073" stroke-width="2.2"/><circle cx="689" cy="1060" r="7.6"/><path d="M694.5 1065.5 L701.3 1072.3 M685.3 1060 H692.7 M689 1056.3 V1063.7"/></g><g stroke="none" fill="#ffffff"><path d="M1387.9 1052.3 C1380.6399999999999 1052.3 1378.946 1054.25 1378.946 1057.76 C1378.946 1060.1 1378.22 1061.075 1376.2839999999999 1063.0249999999999 C1375.316 1064.3899999999999 1375.8 1067.51 1377.01 1068.29 C1380.6399999999999 1070.825 1384.27 1071.8 1387.9 1071.8 C1391.53 1071.8 1395.16 1070.825 1398.79 1068.29 C1400.0 1067.51 1400.484 1064.3899999999999 1399.516 1063.0249999999999 C1397.58 1061.075 1396.854 1060.1 1396.854 1057.76 C1396.854 1054.25 1395.16 1052.3 1387.9 1052.3 Z"/></g><g fill="#0888da" stroke="none"><rect x="1381.124" y="1054.445" width="5.5660000000000105" height="5.265000000000001" rx="2.420000000000005"/><rect x="1389.11" y="1054.445" width="5.5660000000000105" height="5.265000000000001" rx="2.420000000000005"/><path d="M1380.6399999999999 1063.22 Q1387.9 1061.6599999999999 1395.16 1063.22 V1067.8999999999999 Q1387.9 1070.24 1380.6399999999999 1067.8999999999999 Z"/></g><g fill="#ffffff" stroke="none"><rect x="1384.512" y="1064.0" width="1.8150000000000033" height="3.51" rx="0.7260000000000013"/><rect x="1389.473" y="1064.0" width="1.8150000000000033" height="3.51" rx="0.7260000000000013"/></g><g stroke="#ffffff" stroke-width="1.9"><path d="M1270 1053 Q1267.3 1053 1267.3 1055.5 V1059 Q1267.3 1061.5 1265 1061.7 Q1267.3 1062 1267.3 1064.5 V1068 Q1267.3 1070.5 1270 1070.5 M1276.5 1053 Q1279.2 1053 1279.2 1055.5 V1059 Q1279.2 1061.5 1281.5 1061.7 Q1279.2 1062 1279.2 1064.5 V1068 Q1279.2 1070.5 1276.5 1070.5"/><circle cx="1553.7" cy="1061.4" r="9.3"/><path d="M1547.3 1068 L1560.3 1054.8"/><path d="M1696.5 1062.5 L1701.5 1068.5 L1703.5 1066 M1704 1062.5 L1708.8 1068.5 L1718.8 1054.5 M1711.3 1054.5 L1706.5 1061.3"/><path d="M1821.5 1067.3 H1839.3 L1837.3 1064.3 V1058.5 Q1837.3 1051 1830.4 1051 Q1823.5 1051 1823.5 1058.5 V1064.3 Z M1828 1070 Q1830.4 1072.8 1832.8 1070"/></g><path d="M777.5 661 H784.5 M781 661 V676.5 M777.5 676.5 H784.5" stroke="#e8e8e8" stroke-width="1.6"/></svg><span class="t b" style="left:93.90px;top:270.65px;font-size:15.5px;color:#ffffff;letter-spacing:0.000px;transform:scaleX(0.9205);">12</span>
<span class="t b" style="left:197.64px;top:213.30px;font-size:11px;color:#4a3a08;letter-spacing:0.000px;transform:scaleX(0.9721);">JS</span>
<span class="t b" style="left:194.27px;top:251.25px;font-size:10.5px;color:#2c1c55;letter-spacing:0.000px;transform:scaleX(0.7567);">CSS</span></body></html>
